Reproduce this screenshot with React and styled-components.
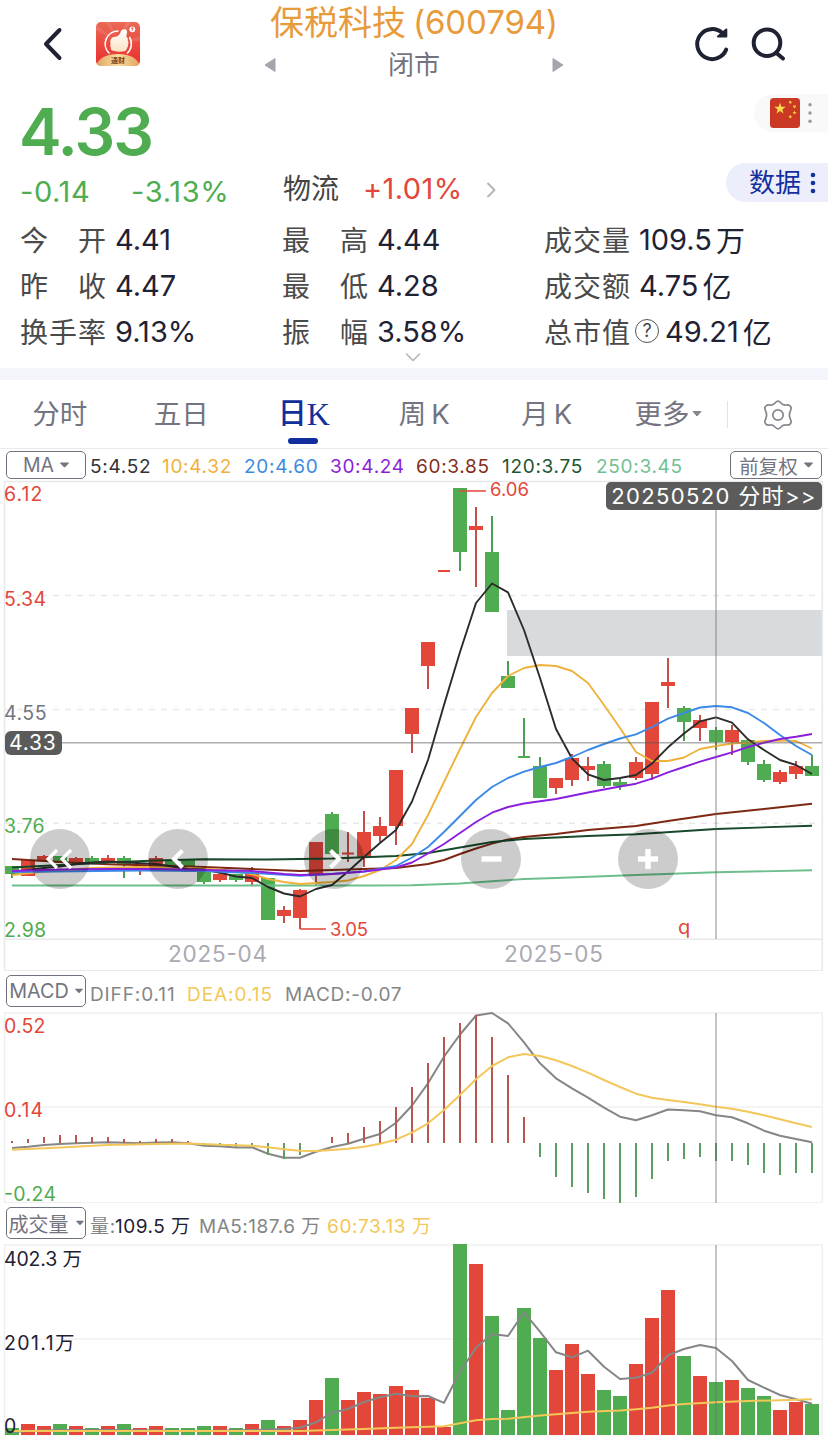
import React from 'react';
import styled, { createGlobalStyle } from 'styled-components';

const RED = '#e2473a';
const GREEN = '#4fac50';
const INK = '#1f2233';
const GREY = '#73747f';
const SANS = "Inter, 'Noto Sans CJK SC', sans-serif";

const GlobalStyle = createGlobalStyle`
  * { box-sizing: border-box; }
  body { margin: 0; background: #fff; font-family: ${SANS}; color: ${INK}; }
  svg { display: block; overflow: visible; }
`;

const Page = styled.main`
  width: 828px;
  height: 1437px;
  overflow: hidden;
  background: #fff;
`;

/* ---------- header ---------- */
const Header = styled.header`
  height: 90px;
  display: grid;
  grid-template-columns: 1fr 300px 1fr;
`;
const HeaderLeft = styled.div`
  display: flex;
  align-items: center;
  gap: 33px;
  height: 88px;
  padding-left: 42px;
`;
const HeaderRight = styled.div`
  display: flex;
  align-items: center;
  justify-content: flex-end;
  gap: 20px;
  height: 88px;
  padding-right: 42px;
`;
const HeaderCenter = styled.div`
  display: flex;
  flex-direction: column;
`;
const Title = styled.h1`
  margin: 0;
  height: 44px;
  font-size: 34px;
  line-height: 45px;
  font-weight: 400;
  color: #e79b3b;
  white-space: nowrap;
  text-align: center;
  display: flex;
  justify-content: center;
  gap: 7px;
`;
const Code = styled.span`
  font-size: 33px;
  letter-spacing: ${(p) => p.$ls || '0'};
`;
const MarketRow = styled.div`
  display: flex;
  align-items: center;
  justify-content: space-between;
  height: 42px;
  font-size: 26px;
  line-height: 42px;
  color: ${GREY};
`;

/* ---------- quote ---------- */
const Quote = styled.section`
  height: 278px;
  display: flex;
  flex-direction: column;
  padding-left: 21px;
`;
const PriceRow = styled.div`
  display: flex;
  justify-content: space-between;
  height: 72px;
`;
const Price = styled.div`
  font-size: 64px;
  line-height: 84px;
  font-weight: 600;
  letter-spacing: -1.9px;
  margin-left: -2px;
  color: ${GREEN};
`;
const FlagPill = styled.div`
  display: flex;
  align-items: center;
  gap: 6px;
  width: 74px;
  height: 38px;
  margin-top: 4px;
  padding-left: 16px;
  border-radius: 19px 0 0 19px;
  background: #f9f9f9;
`;
const ChangeRow = styled.div`
  display: flex;
  align-items: flex-start;
  height: 54px;
  font-size: 29px;
  line-height: 55px;
`;
const Change = styled.span`
  width: ${(p) => p.$w}px;
  margin: -1px 1px 0 -1px;
  color: ${(p) => p.$color};
  letter-spacing: ${(p) => p.$ls || 0}px;
  white-space: nowrap;
  padding-top: ${(p) => p.$pt || 0}px;
`;
const Sector = styled.span`
  width: 81px;
  font-size: 28px;
  color: #444;
`;
const MoreMark = styled.span`
  padding-top: 20px;
`;
const DataPill = styled.div`
  display: flex;
  align-items: center;
  gap: 8px;
  width: 102px;
  height: 39px;
  margin: 1px 0 0 auto;
  padding-left: 23px;
  border-radius: 20px 0 0 20px;
  background: #eceefb;
  color: #14309f;
  font-size: 26px;
  line-height: 39px;
`;
const Stats = styled.div`
  display: grid;
  grid-template-columns: 262px 262px 1fr;
  grid-auto-rows: 46px;
`;
const Stat = styled.div`
  display: flex;
  align-items: center;
  gap: ${(p) => p.$gap || 9}px;
  margin-left: -1px;
  white-space: nowrap;
`;
const StatLabel = styled.span`
  display: flex;
  justify-content: space-between;
  width: 86px;
  font-size: 28px;
  color: #4a4a4a;
`;
const StatValue = styled.span`
  display: flex;
  align-items: center;
  gap: 4px;
  font-size: 29px;
  color: ${INK};
`;
const Help = styled.span`
  width: 24px;
  height: 24px;
  margin: 0 -3px 0 -4px;
  border: 1.5px solid #555;
  border-radius: 50%;
  font-size: 18px;
  line-height: 21px;
  text-align: center;
  color: #444;
`;
const Expand = styled.div`
  display: flex;
  justify-content: center;
  padding-right: 23px;
  margin-top: -1px;
`;
const Divider = styled.div`
  height: 12px;
  background: #f4f5fa;
`;

/* ---------- tabs ---------- */
const Tabs = styled.nav`
  display: flex;
  height: 69px;
  border-bottom: 1px solid #e9e9ee;
`;
const Tab = styled.div`
  position: relative;
  display: flex;
  justify-content: center;
  gap: ${(p) => p.$gap || 0}px;
  width: ${(p) => p.$w || 121.5}px;
  padding-right: ${(p) => p.$pr || 0}px;
  font-size: ${(p) => (p.$active ? 29 : 27.5)}px;
  line-height: 68px;
  color: ${(p) => (p.$active ? '#122e9c' : GREY)};
  font-weight: ${(p) => (p.$active ? 500 : 400)};
  &::after {
    content: '';
    display: ${(p) => (p.$active ? 'block' : 'none')};
    position: absolute;
    left: 45px;
    bottom: 4px;
    width: 30px;
    height: 6px;
    border-radius: 3px;
    background: #122e9c;
  }
`;
const SerifK = styled.span`
  font-family: 'Liberation Serif', serif;
  font-size: 32px;
`;
const TabRule = styled.div`
  width: 1px;
  height: 27px;
  margin: 21px 35px 0 0;
  background: #e2e2e8;
`;
const GearBox = styled.div`
  padding-top: 20px;
`;

/* ---------- indicator rows ---------- */
const IndicatorRow = styled.div`
  display: flex;
  align-items: flex-start;
  height: ${(p) => p.$h}px;
  padding: ${(p) => p.$pt}px 6px 0 6px;
`;
const Picker = styled.div`
  display: flex;
  flex: none;
  align-items: center;
  justify-content: center;
  gap: ${(p) => p.$gap || 6}px;
  width: ${(p) => p.$w || 80}px;
  height: ${(p) => p.$h || 28}px;
  border: 1.5px solid #70717e;
  border-radius: 5px;
  font-size: ${(p) => p.$fs || 19.5}px;
  letter-spacing: ${(p) => p.$ls || 0}px;
  color: ${GREY};
  white-space: nowrap;
`;
const Legend = styled.div`
  display: flex;
  flex: 1;
  padding-left: 4px;
  font-size: 19px;
  line-height: ${(p) => p.$lh}px;
  white-space: nowrap;
`;
const LegendItem = styled.span`
  width: ${(p) => p.$w}px;
  color: ${(p) => p.$color};
  letter-spacing: ${(p) => p.$ls ?? 0.7}px;
`;

/* ---------- charts ---------- */
const ChartBox = styled.section`
  position: relative;
  height: ${(p) => p.$h}px;
`;
const DateTag = styled.div`
  position: absolute;
  right: 6px;
  top: 1px;
  width: 216px;
  height: 28px;
  border-radius: 5px;
  background: #5b5b5b;
  color: #fff;
  font-size: 22px;
  letter-spacing: 1.35px;
  line-height: 29px;
  text-align: center;
  white-space: nowrap;
`;
const PriceTag = styled.div`
  position: absolute;
  left: 5px;
  top: 250px;
  width: 57px;
  height: 24px;
  border-radius: 6px;
  background: #5b5b5b;
  color: #fff;
  font-size: 21px;
  letter-spacing: 0.8px;
  line-height: 24px;
  padding-left: 4px;
`;
const RoundButton = styled.div`
  position: absolute;
  left: ${(p) => p.$x - 30}px;
  top: 348px;
  width: 60px;
  height: 60px;
  border-radius: 50%;
  background: rgba(0, 0, 0, 0.2);
`;

const at = (i) => 12 + i * 16;

/* [up?, body top, body bottom, high, low] */
const candles = [
  [0, 866, 874, 866, 878], [1, 860, 876, 860, 876], [1, 856, 861, 855, 861], [0, 856, 863, 856, 863],
  [1, 858, 863, 857, 863], [0, 858, 863, 856, 864], [1, 858, 862, 855, 863], [0, 858, 864, 856, 878],
  [1, 866, 868, 866, 875], [1, 858, 868, 856, 868], [0, 860, 866, 860, 866], [0, 859, 872, 859, 872],
  [0, 872, 882, 872, 884], [1, 874, 880, 872, 882], [0, 874, 880, 874, 882], [1, 872, 882, 867, 885],
  [0, 878, 920, 878, 920], [1, 910, 916, 906, 923], [1, 890, 918, 889, 929], [1, 842, 874, 842, 886],
  [0, 814, 854, 812, 854], [1, 852.5, 854.5, 832, 862], [1, 832, 857, 811, 867], [1, 826, 836, 817, 842],
  [1, 770, 826, 770, 845], [1, 708, 734, 708, 753], [1, 642, 666, 642, 689], [1, 570, 572, 570, 572],
  [0, 488, 552, 488, 571], [1, 526, 530, 507, 587], [0, 552, 612, 516, 612], [0, 676, 688, 661, 688],
  [0, 756, 758, 718, 758], [0, 766, 798, 757, 798], [1, 778, 788, 778, 794], [1, 758, 780, 754, 786],
  [1, 766, 770, 757, 781], [0, 764, 786, 761, 788], [0, 782, 786, 779, 790], [1, 762, 778, 757, 780],
  [1, 702, 774, 702, 780], [1, 682, 686, 658, 708], [0, 708, 722, 706, 741], [1, 720, 728, 715, 741],
  [0, 730, 742, 727, 750], [1, 730, 742, 725, 755], [0, 740, 762, 740, 765], [0, 764, 780, 760, 782],
  [1, 772, 782, 770, 784], [1, 766, 774, 761, 779], [0, 766, 776, 755, 776],
];

const averages = [
  ['#6cbf8c', { 0: 885.5, 22: 885.5, 25: 885.3, 28: 883.5, 30: 881.3, 32: 879, 34: 878, 39: 875, 44: 872.3, 50: 870.3 }],
  ['#7e2712', { 0: 859, 3: 862, 6: 864.3, 9: 865.5, 12: 867, 15: 869, 18: 871, 20: 870, 24: 868, 25: 866, 26: 864, 27: 860, 28: 854, 29: 848.5, 30: 843.7, 31: 839.5, 32: 837, 34: 834, 36: 830, 39: 826, 41: 821, 44: 814, 47: 809, 50: 803.7 }],
  ['#17492a', { 0: 867.5, 3: 865, 6: 862.5, 9: 860.5, 12: 859.3, 16: 859.5, 20: 858.5, 24: 856, 26: 853, 28: 847.5, 30: 842, 32: 839, 36: 836, 39: 834.3, 44: 829, 50: 825.7 }],
  ['#eeb23c', { 0: 875, 2: 871.5, 5: 868, 8: 867, 11: 868, 13: 869.5, 14: 871.5, 15: 874, 16: 879, 17: 882, 18: 884, 20: 882, 21: 880.5, 22: 876, 23: 870, 24: 860, 25: 844, 26: 815, 27: 782, 28: 749, 29: 717, 30: 693, 31: 676, 32: 668, 33: 665, 34: 666, 35: 671, 36: 683, 37: 705, 38: 728, 39: 752, 40: 761, 41: 761, 42: 757.5, 43: 749, 44: 746, 45: 743.5, 46: 742.5, 47: 741, 48: 740.5, 49: 741, 50: 748.5 }],
  ['#2b2b2b', { 0: 872.5, 1: 870, 2: 868, 3: 866.5, 4: 864, 5: 862.5, 6: 861.5, 9: 864, 11: 869, 12: 869.5, 13: 872.7, 14: 876.5, 15: 878, 16: 887, 17: 893.5, 18: 896.5, 19: 889, 20: 885, 21: 871.5, 22: 857, 23: 843, 24: 830, 25: 801.5, 26: 760, 27: 705, 28: 652, 29: 603, 30: 583.5, 31: 592.3, 32: 630, 33: 678, 34: 729, 35: 758.5, 36: 774.3, 37: 780, 38: 778, 39: 775, 40: 763.5, 41: 747.3, 42: 733.5, 43: 721.3, 44: 717.3, 45: 722.7, 46: 739.3, 47: 750, 48: 760, 49: 765, 50: 774 }],
  ['#3b8ae8', { 0: 872, 4: 871.3, 8: 870.5, 12: 871, 15: 873, 18: 875.8, 20: 874, 22: 871.5, 24: 866, 25: 857.5, 26: 847, 27: 832, 28: 816, 29: 800, 30: 787, 31: 778, 32: 771.7, 33: 767, 34: 763, 35: 757, 36: 750, 37: 744, 38: 738.5, 39: 734.3, 40: 727, 41: 718.7, 42: 713, 43: 707.5, 44: 706, 45: 707.3, 46: 713, 47: 723, 48: 735, 49: 746, 50: 755 }],
  ['#8b1fe0', { 0: 871, 3: 869.5, 6: 869, 9: 869, 12: 870, 15: 871, 17: 874, 18: 875, 20: 874, 22: 871.5, 24: 867.5, 25: 862.5, 26: 853.5, 27: 844, 28: 833, 29: 822, 30: 812.7, 31: 807, 32: 803.5, 34: 799, 36: 792.5, 38: 786.5, 39: 783.7, 40: 778.7, 41: 772.3, 42: 767, 43: 761.7, 44: 757, 45: 752.3, 46: 747, 47: 742.7, 48: 739, 49: 736.7, 50: 734 }],
];

const histogram = [
  1141, 1139, 1137, 1135, 1135, 1137, 1137, 1139, 1141, 1139, 1139, 1141, 1146, 1146.5, 1147, 1145, 1154.6, 1159, 1155, 1143,
  1137, 1133, 1127, 1121, 1107, 1087, 1063, 1037, 1023, 1015, 1037, 1075, 1117, 1157, 1177, 1187, 1193, 1199, 1203, 1197,
  1179, 1161, 1159, 1157, 1161, 1161, 1165, 1173, 1175, 1173, 1173,
];
const diff = [
  1148, 1146.7, 1145, 1144, 1143.3, 1142.7, 1142.2, 1142.8, 1143.3, 1142.5, 1142.2, 1143.3, 1145.7, 1146.3, 1147.5, 1147.3, 1153.7,
  1157.7, 1157.7, 1151.7, 1147, 1143.7, 1138.7, 1134, 1122.7, 1105.5, 1083.3, 1056.7, 1034.5, 1015.5, 1013, 1023.3, 1042.3, 1063.3,
  1078.3, 1088.3, 1097.7, 1107.7, 1116.7, 1120.3, 1115.3, 1109.5, 1110.3, 1111.3, 1115.3, 1117.3, 1123.3, 1130.7, 1135.7, 1139, 1142.3,
];
const dea = {
  0: 1149.7, 3: 1147.5, 6: 1145, 9: 1144, 11: 1143.5, 13: 1144.7, 15: 1145.7, 16: 1147.3, 17: 1149.3, 18: 1150.7, 19: 1151, 20: 1150,
  21: 1148.7, 22: 1146.7, 23: 1143.7, 24: 1139.7, 25: 1132.7, 26: 1123.3, 27: 1110, 28: 1095, 29: 1079.3, 30: 1066, 31: 1057.3,
  32: 1054, 33: 1056, 34: 1060.3, 35: 1066, 36: 1072.7, 37: 1080, 38: 1087, 39: 1093.7, 40: 1097.7, 41: 1100, 42: 1102, 43: 1104.3,
  44: 1106.7, 45: 1108.7, 46: 1111.7, 47: 1115.3, 48: 1119.3, 49: 1123.3, 50: 1127,
};

const volumes = [
  [0, 1428], [1, 1424], [1, 1426], [0, 1424], [1, 1426], [0, 1428], [1, 1426], [0, 1424], [1, 1428], [1, 1426], [0, 1428], [0, 1428],
  [0, 1426], [1, 1426], [0, 1428], [1, 1424], [0, 1420], [1, 1426], [1, 1420], [1, 1400], [0, 1378], [1, 1400], [1, 1392], [1, 1394],
  [1, 1386], [1, 1390], [1, 1398], [1, 1427], [0, 1244], [1, 1264], [0, 1316], [0, 1410], [0, 1308], [0, 1338], [1, 1370], [1, 1344],
  [1, 1374], [0, 1390], [0, 1396], [1, 1364], [1, 1318], [1, 1290], [0, 1356], [1, 1376], [0, 1382], [1, 1380], [0, 1388], [0, 1396],
  [1, 1410], [1, 1402], [0, 1404],
];
const volumeMa5 = {
  0: 1432, 1: 1431, 3: 1430, 6: 1430, 12: 1431, 15: 1430, 17: 1429, 18: 1427.7, 19: 1422.3, 20: 1412.7, 21: 1409, 22: 1402, 23: 1397.3,
  24: 1393.7, 25: 1396.3, 26: 1396, 27: 1402.8, 28: 1371.7, 29: 1347.7, 30: 1334, 31: 1336, 32: 1312.3, 33: 1331.7, 34: 1352.3,
  35: 1357.3, 36: 1350.7, 37: 1366.7, 38: 1379, 39: 1377.7, 40: 1372.7, 41: 1355.3, 42: 1349, 43: 1345, 44: 1348, 45: 1361, 46: 1380,
  47: 1387.7, 48: 1395, 49: 1399.3, 50: 1403.7,
};
const volumeMa60 = {
  0: 1431, 18: 1431, 20: 1430, 22: 1429, 24: 1427.7, 27: 1426.3, 28: 1423.3, 29: 1420.3, 30: 1419, 31: 1418.7, 33: 1415.5, 36: 1411.7,
  38: 1410.5, 39: 1409.3, 40: 1407.7, 41: 1405.5, 42: 1404, 44: 1402.3, 46: 1401, 50: 1399.3,
};

const path = (series) => Object.entries(series).map(([i, y]) => `${at(Number(i))},${y}`).join(' ');

const Line = ({ series, color, width = 2 }) => (
  <polyline points={path(series)} fill="none" stroke={color} strokeWidth={width} strokeLinejoin="round" />
);

const Label = ({ x, y, w, size = 19.5, color, children }) => (
  <text x={x} y={y} fontSize={size} fill={color} textLength={w} fontFamily={SANS}>{children}</text>
);

const Frame = ({ top, bottom, middle, color = '#f0f0f1' }) => (
  <g fill="none" stroke={color} strokeWidth="1.6">
    <path d={`M4.5 ${bottom}V${top}H822.3V${bottom}`} />
    {middle && <path d={`M5 ${middle}H822`} />}
    <path d={`M4.5 ${bottom}H822.3`} strokeWidth="1" />
  </g>
);

const Caret = ({ color = GREY, w = 9 }) => (
  <svg width={w} height="6" viewBox="0 0 9 6"><path d="M.8.5h7.4c.5 0 .7.5.4.9L5.2 5c-.4.4-1 .4-1.4 0L.4 1.4C.1 1 .3.5.8.5z" fill={color} /></svg>
);

const Dots = ({ color, r, gap }) => (
  <svg width="8" height="24" viewBox="0 0 8 24">
    {[-1, 0, 1].map((n) => <circle key={n} cx="4" cy={12 + n * gap} r={r} fill={color} />)}
  </svg>
);

const star = (cx, cy, r, turn = 0) =>
  Array.from({ length: 10 }, (_, k) => {
    const a = -Math.PI / 2 + turn + (k * Math.PI) / 5;
    const q = k % 2 ? r * 0.4 : r;
    return `${(cx + q * Math.cos(a)).toFixed(2)},${(cy + q * Math.sin(a)).toFixed(2)}`;
  }).join(' ');

const Flag = () => (
  <svg width="30" height="30" viewBox="0 0 30 30">
    <rect width="30" height="30" rx="3.5" fill="#cb3824" />
    <g fill="#fbdc4a">
      <polygon points={star(10, 10.7, 6)} />
      <polygon points={star(20.3, 4.3, 2.1, 0.3)} />
      <polygon points={star(24.5, 8.6, 2.1, 0.6)} />
      <polygon points={star(24.5, 14.6, 2.1)} />
      <polygon points={star(20.3, 18.8, 2.1, 0.3)} />
    </g>
  </svg>
);

const Logo = () => (
  <svg width="44" height="44" viewBox="0 0 44 44">
    <defs>
      <linearGradient id="logoRed" x1="0" y1="0" x2="0" y2="1">
        <stop offset="0" stopColor="#ea6a55" /><stop offset="1" stopColor="#ea2c2e" />
      </linearGradient>
      <linearGradient id="logoGold" x1="0" y1="0" x2="1" y2="0">
        <stop offset="0" stopColor="#e2a45c" /><stop offset=".5" stopColor="#f8dca2" /><stop offset="1" stopColor="#e2a45c" />
      </linearGradient>
      <linearGradient id="logoHand" x1="0" y1="0" x2="0" y2="1">
        <stop offset="0" stopColor="#fff" /><stop offset="1" stopColor="#fbe3c4" />
      </linearGradient>
      <clipPath id="logoClip"><rect width="44" height="44" rx="5" /></clipPath>
    </defs>
    <g clipPath="url(#logoClip)">
      <rect width="44" height="44" fill="url(#logoRed)" />
      <path d="M22 20 0 3v5zM22 20 10 0h4zM22 20 30 0h5zM22 20 44 14v5z" fill="#fff" opacity=".1" />
      <path d="M22.500 9A12.900 12.900 0 0 0 13.500 31.500M33.500 15A12.900 12.900 0 0 1 31 31.500" fill="none" stroke="#fff" strokeWidth="1.600" />
      <path d="M15 17Q16 14.800 19.500 14.800 23.500 14 24.800 9.500 25.600 7 28.500 7.200 31.600 7.500 31 10.800L30.300 14.600Q32.400 16 31.800 18.500 33 20.500 32 22.800 32.300 25 31 26 31 29 26.500 29.600 20 30.200 16 28.600 14.300 27.500 14.800 25.600 13.600 23.800 14.500 22 13.600 19 15 17Z" fill="url(#logoHand)" />
      <circle cx="36.300" cy="7.300" r="2.900" fill="#fff" />
      <path d="M35 6.500l1.300-1 1.300 1M36.300 6v3" stroke="#e2473a" strokeWidth=".8" fill="none" />
      <path d="M0 44Q4 32 22 32t22 12z" fill="url(#logoGold)" />
    </g>
    <text x="22" y="41" fontSize="7" fontWeight="700" fontFamily={SANS} fill="#7b3f16" textAnchor="middle">通财</text>
  </svg>
);

const Chevron = ({ w, h, d, color, sw }) => (
  <svg width={w} height={h} viewBox={`0 0 ${w} ${h}`}>
    <path d={d} fill="none" stroke={color} strokeWidth={sw} strokeLinecap="round" strokeLinejoin="round" />
  </svg>
);

const Refresh = () => (
  <svg width="36" height="36" viewBox="0 0 36 36" fill="none" stroke={INK} strokeWidth="4" strokeLinecap="round">
    <path d="M32.200 23.500A15 15 0 1 1 28.500 7.200" />
    <path d="M32.300 3.500V10.500H24z" fill={INK} strokeWidth="2" strokeLinejoin="round" />
  </svg>
);

const Search = () => (
  <svg width="36" height="36" viewBox="0 0 36 36" fill="none" stroke={INK} strokeWidth="4" strokeLinecap="round">
    <circle cx="17" cy="16.800" r="13.300" /><path d="M27 27.500 33 32.500" />
  </svg>
);

const Gear = () => (
  <svg width="30" height="30" viewBox="0 0 30 30" fill="none" stroke="#85868f" strokeWidth="1.700">
    <path d="M12.300 2.700Q15-.300 17.700 2.700C19.300 4.700 20.500 5.300 23 5Q27 4.300 28.200 7.800C28.500 9 26.400 12 26.400 15S28.500 21 28.200 22.200Q27 25.700 23 25C20.500 24.700 19.300 25.300 17.700 27.300Q15 30.300 12.300 27.300C10.700 25.300 9.500 24.700 7 25Q3 25.700 1.800 22.200C1.500 21 3.600 18 3.600 15S1.500 9 1.800 7.800Q3 4.300 7 5C9.500 5.300 10.700 4.700 12.300 2.700Z" />
    <circle cx="15" cy="15" r="5.200" />
  </svg>
);

const buttons = [
  { x: 60, d: 'M27 21 18 30 27 39M41 21 32 30 41 39', sw: 3.2 },
  { x: 178, d: 'M34.500 21.500 26 30 34.500 38.500', sw: 4.2 },
  { x: 334, d: 'M26.500 21.500 35 30 26.500 38.500', sw: 4.2 },
  { x: 491, d: 'M20.500 30H40.500', sw: 5.5 },
  { x: 648, d: 'M20 30H40M30 20V40', sw: 5.5 },
];

const stats = [
  [['今', '开'], '4.41'], [['最', '高'], '4.44'], [['成', '交', '量'], '109.5', '万'],
  [['昨', '收'], '4.47'], [['最', '低'], '4.28'], [['成', '交', '额'], '4.75', '亿'],
  [['换', '手', '率'], '9.13%'], [['振', '幅'], '3.58%'], [['总', '市', '值'], '49.21', '亿', true],
];

const maLegend = [
  ['5:4.52', '#333', 72], ['10:4.32', '#eeb23c', 82], ['20:4.60', '#3b8ae0', 86], ['30:4.24', '#8b1fd8', 86],
  ['60:3.85', '#843018', 86], ['120:3.75', '#1e5531', 94], ['250:3.45', '#72c092', 90],
];

export default function App() {
  return (
    <Page>
      <GlobalStyle />
      <Header>
        <HeaderLeft>
          <Chevron w={21} h={34} d="M17.500 3 4 17 17.500 31" color={INK} sw={4} />
          <Logo />
        </HeaderLeft>
        <HeaderCenter>
          <Title><span>保税科技</span><Code $ls="-0.1px">(600794)</Code></Title>
          <MarketRow>
            <svg width="12" height="14"><path d="M1 7 11 .500V13.500z" fill="#a5a6ad" stroke="#a5a6ad" strokeLinejoin="round" /></svg>
            <span>闭市</span>
            <svg width="12" height="14"><path d="M11 7 1 .500V13.500z" fill="#a5a6ad" stroke="#a5a6ad" strokeLinejoin="round" /></svg>
          </MarketRow>
        </HeaderCenter>
        <HeaderRight><Refresh /><Search /></HeaderRight>
      </Header>

      <Quote>
        <PriceRow>
          <Price>4.33</Price>
          <FlagPill><Flag /><Dots color="#999" r={1.7} gap={8.3} /></FlagPill>
        </PriceRow>
        <ChangeRow>
          <Change $w={111} $color={GREEN} $pt={3} $ls={0.6}>-0.14</Change>
          <Change $w={151} $color={GREEN} $pt={3} $ls={0.7}>-3.13%</Change>
          <Sector>物流</Sector>
          <Change $w={122} $color={RED} $ls={0.4}>+1.01%</Change>
          <MoreMark><Chevron w={12} h={16} d="M2 1.500 8.500 8 2 14.500" color="#b5b5ba" sw={2} /></MoreMark>
          <DataPill>数据<Dots color="#14309f" r={2.3} gap={8} /></DataPill>
        </ChangeRow>
        <Stats>
          {stats.map(([label, value, unit, help]) => (
            <Stat key={label.join('')}>
              <StatLabel>{label.map((c) => <span key={c}>{c}</span>)}</StatLabel>
              {help && <Help>?</Help>}
              <StatValue><span>{value}</span>{unit && <span>{unit}</span>}</StatValue>
            </Stat>
          ))}
        </Stats>
        <Expand><Chevron w={16} h={9} d="M1.500 1 8 7.500 14.500 1" color="#b5b5ba" sw={1.6} /></Expand>
      </Quote>
      <Divider />

      <Tabs>
        <Tab $pr={2}>分时</Tab>
        <Tab $pr={2}>五日</Tab>
        <Tab $active>日<SerifK>K</SerifK></Tab>
        <Tab $gap={5} $pr={2}>周<span>K</span></Tab>
        <Tab $gap={5}>月<span>K</span></Tab>
        <Tab $w={119}><span>更多</span><svg width="10" height="68"><path d="M3 31.500h8L7 36z" fill="#85868f" stroke="#85868f" strokeLinejoin="round" /></svg></Tab>
        <TabRule />
        <GearBox><Gear /></GearBox>
      </Tabs>

      <IndicatorRow $h={32} $pt={2}>
        <Picker>MA<Caret /></Picker>
        <Legend $lh={31}>
          {maLegend.map(([text, color, w]) => <LegendItem key={text} $color={color} $w={w}>{text}</LegendItem>)}
        </Legend>
        <Picker $w={92}>前复权<Caret /></Picker>
      </IndicatorRow>

      <ChartBox $h={491}>
        <svg width="828" height="491" viewBox="0 481 828 491">
          <rect x="507" y="610" width="315" height="46" fill="#d8dbde" />
          <Frame top={481.5} bottom={970.5} color="#e8e9ea" />
          <path d="M5 939.300H822" stroke="#e8e9ea" strokeWidth="1.600" />
          <path d="M5 595.500H822M5 709.500H822M5 823.300H822" stroke="#e9e9eb" strokeWidth="1.600" strokeDasharray="6 6" />
          {candles.map(([up, top, bottom, high, low], i) => (
            <g key={i} fill={up ? RED : GREEN}>
              <rect x={at(i) - 1} y={high} width="2" height={low - high} fill={up ? '#c4504a' : '#4a9f50'} />
              <rect x={i ? at(i) - (bottom - top < 3 ? 6 : 7) : 5} y={top} width={bottom - top < 3 ? 12 : 14} height={bottom - top} />
            </g>
          ))}
          {averages.map(([color, series]) => <Line key={color} series={series} color={color} width={1.9} />)}
          <path d="M460 491H486M300 929H326" stroke={RED} strokeWidth="1.700" />
          <Label x={490} y={495.5} w={39} size={18.5} color={RED}>6.06</Label>
          <Label x={330} y={935.5} w={38} size={18.5} color={RED}>3.05</Label>
          <Label x={4} y={501} w={38.5} color={RED}>6.12</Label>
          <Label x={4} y={605.500} w={42} color={RED}>5.34</Label>
          <Label x={4} y={719.500} w={42.500} color="#73747f">4.55</Label>
          <Label x={4} y={833} w={40.5} color={GREEN}>3.76</Label>
          <Label x={4} y={937} w={42} color={GREEN}>2.98</Label>
          <Label x={168} y={962} w={99} size={22.5} color="#a9aab2">2025-04</Label>
          <Label x={504} y={962} w={99} size={22.5} color="#a9aab2">2025-05</Label>
          <Label x={678} y={934} size={20} color={RED}>q</Label>
          <path d="M5 742.700H822" stroke="rgba(90,90,90,.5)" strokeWidth="1.500" />
          <path d="M716 482V939" stroke="rgba(110,110,110,.42)" strokeWidth="1.900" />
        </svg>
        <DateTag>20250520 分时&gt;&gt;</DateTag>
        <PriceTag>4.33</PriceTag>
        {buttons.map(({ x, d, sw }) => (
          <RoundButton key={x} $x={x}>
            <svg width="60" height="60"><path d={d} fill="none" stroke="#fff" strokeWidth={sw} /></svg>
          </RoundButton>
        ))}
      </ChartBox>

      <IndicatorRow $h={40} $pt={3}>
        <Picker $h={32} $fs={19.8} $gap={6}>MACD<Caret w={8} /></Picker>
        <Legend $lh={39}>
          <LegendItem $w={97} $color="#858585" $ls={0.9}>DIFF:0.11</LegendItem>
          <LegendItem $w={98} $color="#f3c759" $ls={0.95}>DEA:0.15</LegendItem>
          <LegendItem $w={130} $color="#858585" $ls={0.7}>MACD:-0.07</LegendItem>
        </Legend>
      </IndicatorRow>
      <ChartBox $h={192}>
        <svg width="828" height="192" viewBox="0 1012 828 192">
          <Frame top={1013} middle={1107} bottom={1202.5} />
          <Line series={diff} color="#868686" />
          {histogram.map((y, i) => (
            <rect key={i} x={at(i) - 1} y={Math.min(y, 1143)} width="2" height={Math.abs(y - 1143)} fill={y < 1143 ? '#b9584e' : '#5c9f60'} />
          ))}
          <Line series={dea} color="#f3c759" />
          <Label x={4} y={1033} w={41.500} color={RED}>0.52</Label>
          <Label x={4} y={1117} w={39} color={RED}>0.14</Label>
          <Label x={4} y={1200.5} w={52} color={GREEN}>-0.24</Label>
          <path d="M716 1013V1203" stroke="rgba(110,110,110,.42)" strokeWidth="1.900" />
        </svg>
      </ChartBox>

      <IndicatorRow $h={40} $pt={3}>
        <Picker $h={32} $fs={20} $gap={7}>成交量<Caret w={8} /></Picker>
        <Legend $lh={39}>
          <LegendItem $w={25} $color="#858585">量:</LegendItem>
          <LegendItem $w={84} $color={INK} $ls={0.5}>109.5 万</LegendItem>
          <LegendItem $w={128} $color="#858585" $ls={0.5}>MA5:187.6 万</LegendItem>
          <LegendItem $w={110} $color="#f3c759" $ls={0.6}>60:73.13 万</LegendItem>
        </Legend>
      </IndicatorRow>
      <ChartBox $h={193}>
        <svg width="828" height="193" viewBox="0 1244 828 193">
          <Frame top={1245} middle={1339} bottom={1435} />
          {volumes.map(([up, y], i) => (
            <rect key={i} x={i ? at(i) - 7 : 5} y={y} width="14" height={1435 - y} fill={up ? RED : GREEN} />
          ))}
          <Line series={volumeMa5} color="#868686" />
          <Line series={volumeMa60} color="#f3c759" />
          <Label x={4} y={1265.5} w={78} color={INK}>402.3 万</Label>
          <Label x={4} y={1349.5} w={70.5} color={INK}>201.1万</Label>
          <Label x={4} y={1433} color={INK}>0</Label>
          <path d="M716 1245V1435" stroke="rgba(110,110,110,.42)" strokeWidth="1.900" />
        </svg>
      </ChartBox>
    </Page>
  );
}
